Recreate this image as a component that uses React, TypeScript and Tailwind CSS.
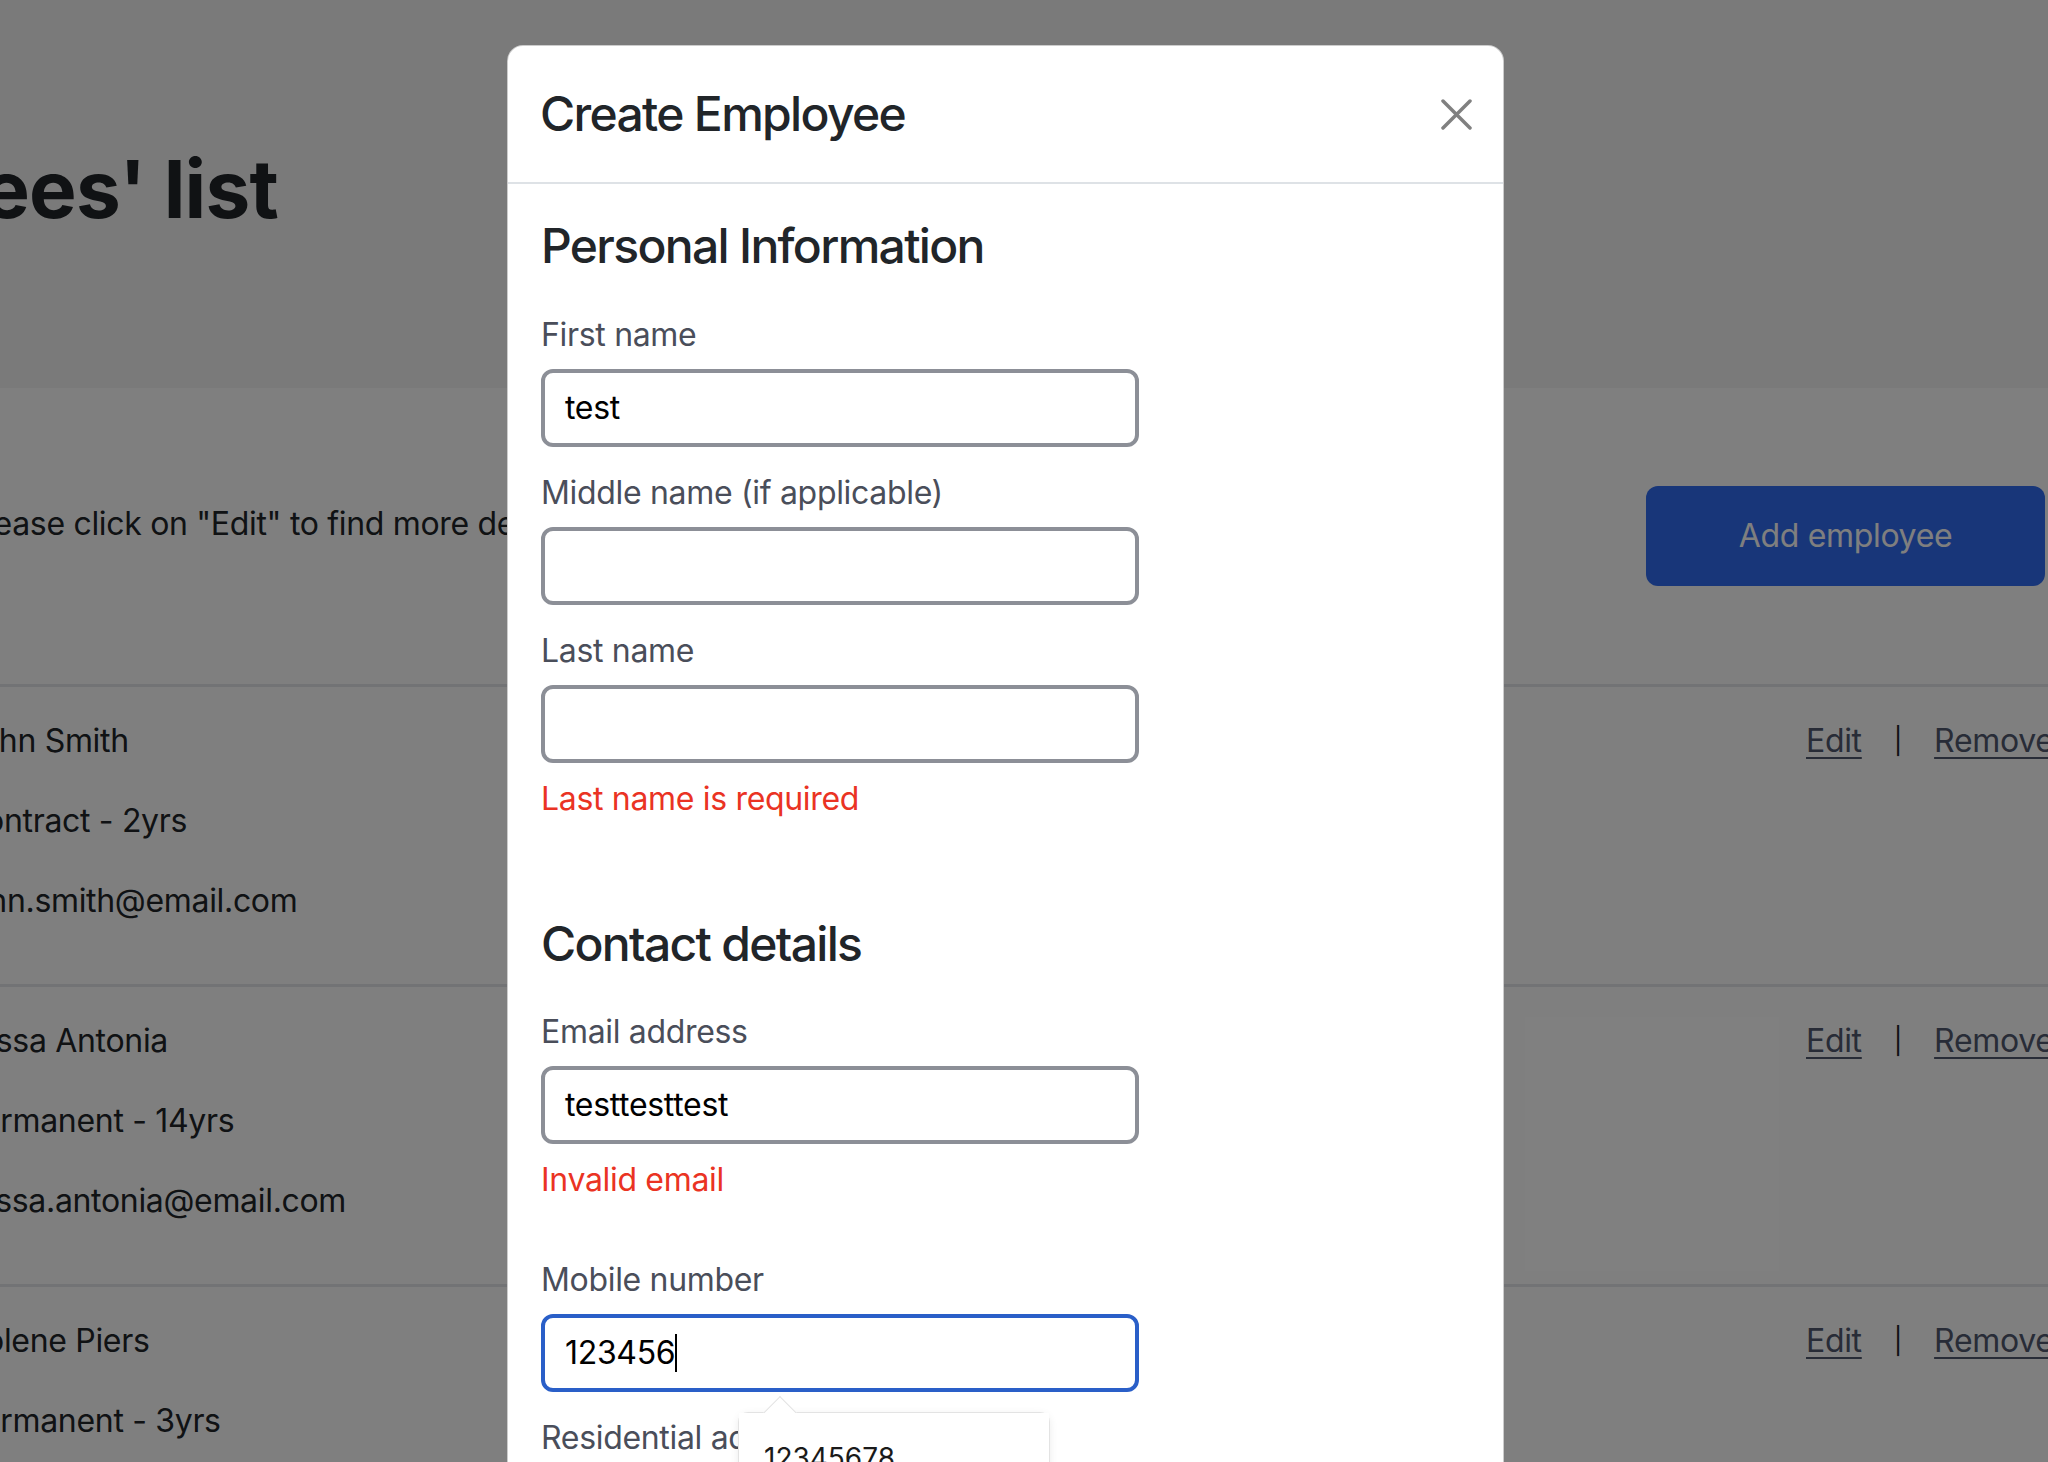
import React from "react";

const EMPLOYEES = [
  { name: "John Smith", type: "Contract - 2yrs", email: "john.smith@email.com" },
  { name: "Elissa Antonia", type: "Permanent - 14yrs", email: "elissa.antonia@email.com" },
  { name: "Colene Piers", type: "Permanent - 3yrs", email: "colene.piers@email.com" },
];

function EmployeeRow({ e }: { e: (typeof EMPLOYEES)[number] }) {
  return (
    <div className="flex h-[300px] border-t-[3px] border-[#e5e7eb] pt-[30px] text-[32px] leading-[48px]">
      <div className="-ml-[38px] flex w-[1844px] shrink-0 flex-col gap-[32px] whitespace-nowrap">
        <span>{e.name}</span>
        <span>{e.type}</span>
        <span>{e.email}</span>
      </div>
      <div className="flex shrink-0 items-center self-start whitespace-nowrap">
        <a className="text-[#50586e] underline decoration-2 underline-offset-[5px]">Edit</a>
        <span className="mx-[32px] text-[26px]">|</span>
        <a className="text-[#50586e] underline decoration-2 underline-offset-[5px]">Remove</a>
      </div>
    </div>
  );
}

function Field({
  label,
  value,
  error,
  focused,
  className = "",
}: {
  label: string;
  value?: string;
  error?: string;
  focused?: boolean;
  className?: string;
}) {
  return (
    <div className={className}>
      <label className="mb-[10px] block text-[32px] leading-[48px] text-[#4a4e5a]">{label}</label>
      <div
        className={
          focused
            ? "flex h-[78px] w-[598px] items-center rounded-[12px] border-4 border-[#2a5fc8] px-[20px] text-[32px] text-black"
            : "flex h-[78px] w-[598px] items-center rounded-[12px] border-4 border-[#8c8f97] px-[20px] text-[32px] text-black"
        }
      >
        <span>{value}</span>
        {focused && <span className="h-[38px] w-[2px] bg-black" />}
      </div>
      {error && <p className="mt-[12px] text-[32px] leading-[48px] text-[#ea3323]">{error}</p>}
    </div>
  );
}

function CloseIcon() {
  return (
    <svg width="31" height="31" viewBox="0 0 31 31" fill="none">
      <path d="M2 2L29 29M29 2L2 29" stroke="#808080" strokeWidth="3.5" strokeLinecap="round" />
    </svg>
  );
}

export default function App() {
  return (
    <div className="relative h-[1462px] w-[2048px] overflow-hidden bg-white font-[Inter,sans-serif] tracking-[-0.02em] text-[#212529]">
      {/* page behind the modal */}
      <div className="h-[388px] bg-[#f4f4f4] pt-[141px]">
        <div className="flex w-[278px] justify-end whitespace-nowrap">
          <h1 className="text-[80px] font-bold leading-[96px] tracking-[-0.01em]">Employees' list</h1>
        </div>
      </div>
      <div className="flex h-[296px] items-start justify-between">
        <p className="-ml-[34px] mt-[112px] whitespace-nowrap text-[32px] leading-[48px]">
          Please click on "Edit" to find more details
        </p>
        <button className="mr-[3px] mt-[98px] h-[100px] w-[399px] rounded-[12px] bg-[#306cf2] text-[32px] text-white">
          Add employee
        </button>
      </div>
      {EMPLOYEES.map((e) => (
        <EmployeeRow key={e.email} e={e} />
      ))}

      {/* backdrop */}
      <div className="absolute inset-0 bg-black/50" />

      {/* modal */}
      <div className="absolute left-[507px] top-[45px] h-[1520px] w-[997px] rounded-[16px] border border-black/20 bg-white">
        <div className="flex h-[138px] items-center justify-between border-b-2 border-[#dee2e6] pl-[32px] pr-[31px]">
          <h5 className="text-[48px] font-medium leading-[58px] tracking-[-0.035em] text-[#212529]">Create Employee</h5>
          <CloseIcon />
        </div>
        <div className="relative pl-[33px] pt-[33px]">
          <h4 className="mb-[36px] text-[48px] font-medium leading-[58px] tracking-[-0.035em]">Personal Information</h4>
          <Field label="First name" value="test" />
          <Field label="Middle name (if applicable)" className="mt-[22px]" />
          <Field label="Last name" className="mt-[22px]" error="Last name is required" />

          <h4 className="mt-[92px] text-[48px] font-medium leading-[58px] tracking-[-0.035em]">Contact details</h4>
          <Field label="Email address" value="testtesttest" className="mt-[35px]" error="Invalid email" />
          <Field label="Mobile number" value="123456" focused className="mt-[52px]" />
          <div className="mt-[22px] text-[32px] leading-[48px] text-[#4a4e5a]">Residential address</div>

          {/* autofill suggestion */}
          <div className="absolute left-[230px] top-[1228px] h-[200px] w-[312px] rounded-[10px] border border-[#e3e3e3] bg-white shadow-[0_2px_8px_rgba(0,0,0,0.08)]">
            <div className="absolute -top-[12px] left-[29px] h-[24px] w-[24px] rotate-45 border-l border-t border-[#e3e3e3] bg-white" />
            <div className="relative bg-white pl-[25px] pt-[25px] text-[28px] leading-[40px] tracking-normal text-[#1a1a1a]">12345678</div>
          </div>
        </div>
      </div>
    </div>
  );
}
